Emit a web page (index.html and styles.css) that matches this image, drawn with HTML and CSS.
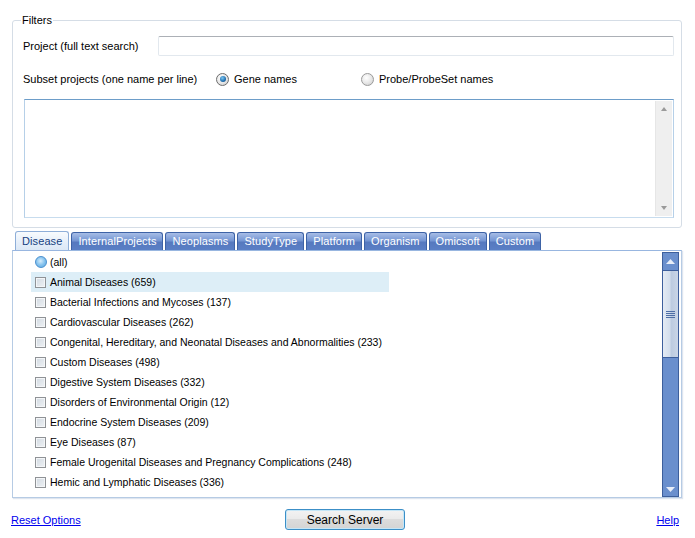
FILE: index.html
```html
<!DOCTYPE html>
<html>
<head>
<meta charset="utf-8">
<link rel="stylesheet" href="styles.css">
</head>
<body>
<div class="page">
  <fieldset class="filters">
    <legend>Filters</legend>
    <div class="row project-row">
      <span class="label">Project (full text search)</span>
      <div class="input"></div>
    </div>
    <div class="row subset-row">
      <span class="label">Subset projects (one name per line)</span>
      <span class="opt opt-gene"><span class="radio checked"></span>Gene names</span>
      <span class="opt opt-probe"><span class="radio"></span>Probe/ProbeSet names</span>
    </div>
    <div class="textarea">
      <div class="ta-scroll">
        <span class="ta-arrow up"></span>
        <span class="ta-arrow down"></span>
      </div>
    </div>
  </fieldset>

  <div class="tabs">
    <span class="tab active">Disease</span>
    <span class="tab">InternalProjects</span>
    <span class="tab">Neoplasms</span>
    <span class="tab">StudyType</span>
    <span class="tab">Platform</span>
    <span class="tab">Organism</span>
    <span class="tab">Omicsoft</span>
    <span class="tab">Custom</span>
  </div>

  <div class="panel">
    <div class="list">
      <div class="item"><span class="radio all"></span>(all)</div>
      <div class="item selected"><span class="check"></span>Animal Diseases (659)</div>
      <div class="item"><span class="check"></span>Bacterial Infections and Mycoses (137)</div>
      <div class="item"><span class="check"></span>Cardiovascular Diseases (262)</div>
      <div class="item"><span class="check"></span>Congenital, Hereditary, and Neonatal Diseases and Abnormalities (233)</div>
      <div class="item"><span class="check"></span>Custom Diseases (498)</div>
      <div class="item"><span class="check"></span>Digestive System Diseases (332)</div>
      <div class="item"><span class="check"></span>Disorders of Environmental Origin (12)</div>
      <div class="item"><span class="check"></span>Endocrine System Diseases (209)</div>
      <div class="item"><span class="check"></span>Eye Diseases (87)</div>
      <div class="item"><span class="check"></span>Female Urogenital Diseases and Pregnancy Complications (248)</div>
      <div class="item"><span class="check"></span>Hemic and Lymphatic Diseases (336)</div>
      <div class="item partial"><span class="check"></span></div>
    </div>
    <div class="scrollbar">
      <div class="sb-btn sb-up"><svg width="9" height="5" viewBox="0 0 9 5"><path d="M0 5 L4.5 0 L9 5 Z" fill="#e8eef8"/></svg></div>
      <div class="sb-thumb">
        <div class="grip"><i></i><i></i><i></i><i></i></div>
      </div>
      <div class="sb-track"></div>
      <div class="sb-btn sb-down"><svg width="9" height="5" viewBox="0 0 9 5"><path d="M0 0 L9 0 L4.5 5 Z" fill="#e8eef8"/></svg></div>
    </div>
  </div>

  <div class="footer">
    <a class="link" href="#">Reset Options</a>
    <button class="btn">Search Server</button>
    <a class="link help" href="#">Help</a>
  </div>
</div>
</body>
</html>
```

FILE: styles.css
```css
html, body {
  margin: 0;
  padding: 0;
  background: #ffffff;
}
body {
  font-family: "Liberation Sans", Arial, sans-serif;
  font-size: 11px;
  color: #000000;
}
.page {
  width: 695px;
  height: 538px;
  overflow: hidden;
}

/* ---------- Filters group ---------- */
.filters {
  margin: 14px 13px 0 12px;
  padding: 10px 7px 10px 10px;
  border: 1px solid #d5dde6;
  border-radius: 3px;
  min-width: 0;
  height: 214px;
  box-sizing: border-box;
}
.filters legend {
  padding: 0 1px;
  margin-left: -2px;
  font-size: 11px;
  color: #000;
}
.row {
  display: flex;
  align-items: center;
}
.project-row {
  height: 20px;
}
.project-row .label {
  width: 135px;
}
.input {
  flex: 1;
  height: 18px;
  border: 1px solid #e2e8ee;
  border-top-color: #acb0b6;
  border-radius: 2px;
  background: #fff;
}
.subset-row {
  margin-top: 15px;
  height: 16px;
}
.subset-row .label {
  width: 193px;
}
.opt {
  display: inline-flex;
  align-items: center;
}
.opt-gene {
  width: 145px;
}
.radio {
  display: inline-block;
  flex-shrink: 0;
  width: 11px;
  height: 11px;
  border-radius: 50%;
  border: 1px solid #9a9a9a;
  background: radial-gradient(circle at 40% 35%, #ffffff 0%, #e8e8e8 50%, #c9c9c9 100%);
  margin-right: 5px;
  box-sizing: content-box;
  position: relative;
}
.radio.checked {
  border-color: #6d6d6d;
}
.radio.checked::after {
  content: "";
  position: absolute;
  left: 2.5px;
  top: 2.5px;
  width: 6px;
  height: 6px;
  border-radius: 50%;
  background: radial-gradient(circle at 40% 35%, #7cc6f0 0%, #1f6fb0 60%, #0d3f6e 100%);
}
.textarea {
  margin: 12px 0 0 1px;
  height: 115px;
  border: 1px solid #b6d0e8;
  border-top-color: #6d9dc9;
  border-bottom-color: #c7dcee;
  background: #fff;
  display: flex;
  justify-content: flex-end;
  padding: 1px;
}
.ta-scroll {
  width: 16px;
  background: #efefef;
  border-left: 1px solid #e6e6e6;
  display: flex;
  flex-direction: column;
  justify-content: space-between;
  align-items: center;
  padding: 6px 0 6px;
}
.ta-arrow {
  width: 0;
  height: 0;
  border-left: 3.5px solid transparent;
  border-right: 3.5px solid transparent;
}
.ta-arrow.up {
  border-bottom: 4px solid #9a9a9a;
}
.ta-arrow.down {
  border-top: 4px solid #9a9a9a;
}

/* ---------- Tabs ---------- */
.tabs {
  display: flex;
  gap: 2px;
  margin: 3px 0 0 15px;
  height: 19px;
  align-items: flex-end;
}
.tab {
  height: 18px;
  box-sizing: border-box;
  padding: 0 6px;
  border: 1px solid #3e63a6;
  border-bottom: none;
  border-radius: 3px 3px 0 0;
  background: linear-gradient(#a7bde6 0%, #7596d3 45%, #5679bf 55%, #5a7fc5 100%);
  color: #ffffff;
  font-family: "Liberation Sans", Arial, sans-serif;
  font-size: 11px;
  letter-spacing: 0.1px;
  line-height: 17px;
  white-space: nowrap;
}
.tab.active {
  height: 19px;
  border-color: #8eaed8;
  background: linear-gradient(#f8fbfe 0%, #e5eef9 60%, #dce8f6 100%);
  color: #163f80;
  line-height: 19px;
}

/* ---------- Panel ---------- */
.panel {
  margin: 0 13px 0 12px;
  height: 248px;
  box-sizing: border-box;
  border: 1px solid #b6cbe4;
  border-top-color: #98b6e0;
  display: flex;
  justify-content: space-between;
  overflow: hidden;
  box-shadow: 1px 1px 1px rgba(160, 180, 210, 0.35);
}
.list {
  padding: 1px 0 0 18px;
  font-size: 10.5px;
}
.item {
  width: 358px;
  height: 20px;
  display: flex;
  align-items: center;
  padding-left: 4px;
  box-sizing: border-box;
  white-space: nowrap;
}
.item.selected {
  background: #ddeef7;
}
.radio.all {
  width: 10px;
  height: 10px;
  border: 1px solid #4a90cf;
  background: radial-gradient(circle at 45% 40%, #d6ecfb 0%, #86c3ee 50%, #5aa6de 100%);
  margin-right: 3px;
}
.check {
  display: inline-block;
  flex-shrink: 0;
  width: 11px;
  height: 11px;
  box-sizing: border-box;
  border: 1px solid #8f9296;
  background: linear-gradient(135deg, #d2dae2 0%, #eef1f4 100%);
  box-shadow: inset 0 0 0 1px #f4f6f8;
  margin-right: 4px;
}

/* ---------- Scrollbar ---------- */
.scrollbar {
  width: 17px;
  margin: 1px 2px 0 0;
  box-sizing: border-box;
  border: 1px solid #3d5f9c;
  background: #6a8fcd;
  display: flex;
  flex-direction: column;
}
.sb-btn {
  height: 17px;
  display: flex;
  align-items: center;
  justify-content: center;
  background: #6a8fcd;
}
.sb-up {
  border-bottom: 1px solid #3d5f9c;
}
.sb-down {
  height: 13px;
}
.sb-thumb {
  height: 86px;
  border-bottom: 1px solid #3d5f9c;
  background: linear-gradient(90deg, #e4ebf4 0%, #d3deec 45%, #bccbe0 55%, #c9d5e6 100%);
  display: flex;
  align-items: center;
  justify-content: center;
}
.grip {
  display: flex;
  flex-direction: column;
  gap: 1px;
}
.grip i {
  display: block;
  width: 9px;
  height: 1px;
  background: #4f6fa6;
}
.sb-track {
  flex: 1;
}

/* ---------- Footer ---------- */
.footer {
  display: grid;
  grid-template-columns: 1fr auto 1fr;
  align-items: center;
  margin: 11px 16px 0 11px;
  height: 20px;
}
.link {
  color: #0000ee;
  text-decoration: underline;
  font-size: 11px;
}
.help {
  justify-self: end;
}
.btn {
  width: 120px;
  height: 21px;
  border: 1px solid #3c8fc7;
  border-radius: 3px;
  background: linear-gradient(#f3f3f3 0%, #ebebeb 45%, #dcdcdc 50%, #d4d4d4 100%);
  box-shadow: inset 0 0 0 1px #c5e6f7;
  font-family: "Liberation Sans", Arial, sans-serif;
  font-size: 12px;
  color: #000;
  padding: 0;
}
```
